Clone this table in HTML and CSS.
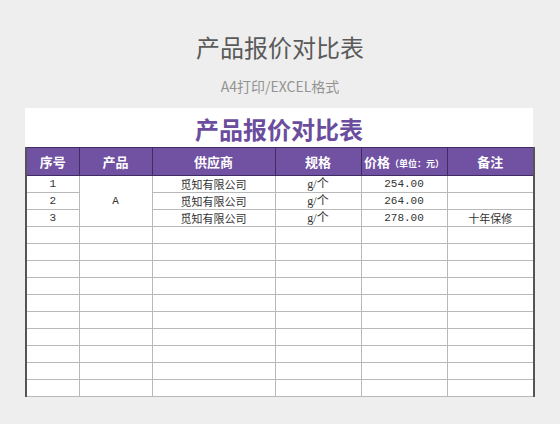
FILE: index.html
```html
<!DOCTYPE html>
<html lang="zh">
<head>
<meta charset="utf-8">
<link rel="stylesheet" href="styles.css">
</head>
<body>
<div class="page">
  <h1 class="main-title">产品报价对比表</h1>
  <p class="subtitle">A4打印/EXCEL格式</p>
  <div class="paper">
    <div class="sheet-title">产品报价对比表</div>
    <table class="grid">
      <colgroup>
        <col class="c1"><col class="c2"><col class="c3"><col class="c4"><col class="c5"><col class="c6">
      </colgroup>
      <thead>
        <tr>
          <th>序号</th>
          <th>产品</th>
          <th>供应商</th>
          <th>规格</th>
          <th>价格<span class="unit">（单位：元）</span></th>
          <th>备注</th>
        </tr>
      </thead>
      <tbody>
        <tr><td class="num">1</td><td class="prod" rowspan="3">A</td><td>觅知有限公司</td><td class="spec">g/个</td><td class="num">254.00</td><td></td></tr>
        <tr><td class="num">2</td><td>觅知有限公司</td><td class="spec">g/个</td><td class="num">264.00</td><td></td></tr>
        <tr><td class="num">3</td><td>觅知有限公司</td><td class="spec">g/个</td><td class="num">278.00</td><td>十年保修</td></tr>
        <tr><td></td><td></td><td></td><td></td><td></td><td></td></tr>
        <tr><td></td><td></td><td></td><td></td><td></td><td></td></tr>
        <tr><td></td><td></td><td></td><td></td><td></td><td></td></tr>
        <tr><td></td><td></td><td></td><td></td><td></td><td></td></tr>
        <tr><td></td><td></td><td></td><td></td><td></td><td></td></tr>
        <tr><td></td><td></td><td></td><td></td><td></td><td></td></tr>
        <tr><td></td><td></td><td></td><td></td><td></td><td></td></tr>
        <tr><td></td><td></td><td></td><td></td><td></td><td></td></tr>
        <tr><td></td><td></td><td></td><td></td><td></td><td></td></tr>
        <tr><td></td><td></td><td></td><td></td><td></td><td></td></tr>
      </tbody>
    </table>
  </div>
</div>
</body>
</html>
```

FILE: styles.css
```css
html, body {
  margin: 0;
  padding: 0;
  background: #eeeeee;
}
body {
  width: 560px;
  height: 424px;
  overflow: hidden;
  font-family: "Noto Sans CJK SC", "Noto Sans", sans-serif;
}
.page {
  padding-top: 32px;
}
.main-title {
  margin: 0;
  text-align: center;
  font-size: 24px;
  line-height: 30px;
  font-weight: 400;
  color: #5a5a5a;
}
.subtitle {
  margin: 14px 0 0;
  text-align: center;
  font-size: 14px;
  line-height: 21px;
  color: #939393;
}
.paper {
  margin: 11px 0 0 25px;
  width: 508px;
  background: #ffffff;
}
.sheet-title {
  height: 39px;
  line-height: 42px;
  text-align: center;
  font-size: 24px;
  font-weight: 700;
  color: #6b4d9d;
}
.grid {
  width: 508px;
  border-collapse: collapse;
  table-layout: fixed;
  border-left: 2px solid #555555;
  border-right: 2px solid #555555;
  border-bottom: 1px solid #bdbdbd;
}
.c1 { width: 53px; }
.c2 { width: 73px; }
.c3 { width: 123px; }
.c4 { width: 86px; }
.c5 { width: 86px; }
.c6 { width: 87px; }
.grid th {
  height: 27px;
  padding: 0;
  background: #7152a2;
  color: #ffffff;
  font-size: 13px;
  font-weight: 700;
  border: 1px solid #3f2c63;
  white-space: nowrap;
}
.grid th .unit {
  font-size: 9px;
  font-weight: 700;
}
.grid td {
  height: 16px;
  padding: 0;
  border: 1px solid #b9b9b9;
  text-align: center;
  font-size: 11px;
  line-height: 15px;
  color: #333333;
}
.grid td.num {
  font-family: "Liberation Mono", monospace;
  font-size: 11px;
}
.grid td.spec {
  font-family: "Liberation Serif", "Noto Sans CJK SC", serif;
  font-size: 12px;
}
.grid td.prod {
  font-family: "Liberation Mono", monospace;
}
```
